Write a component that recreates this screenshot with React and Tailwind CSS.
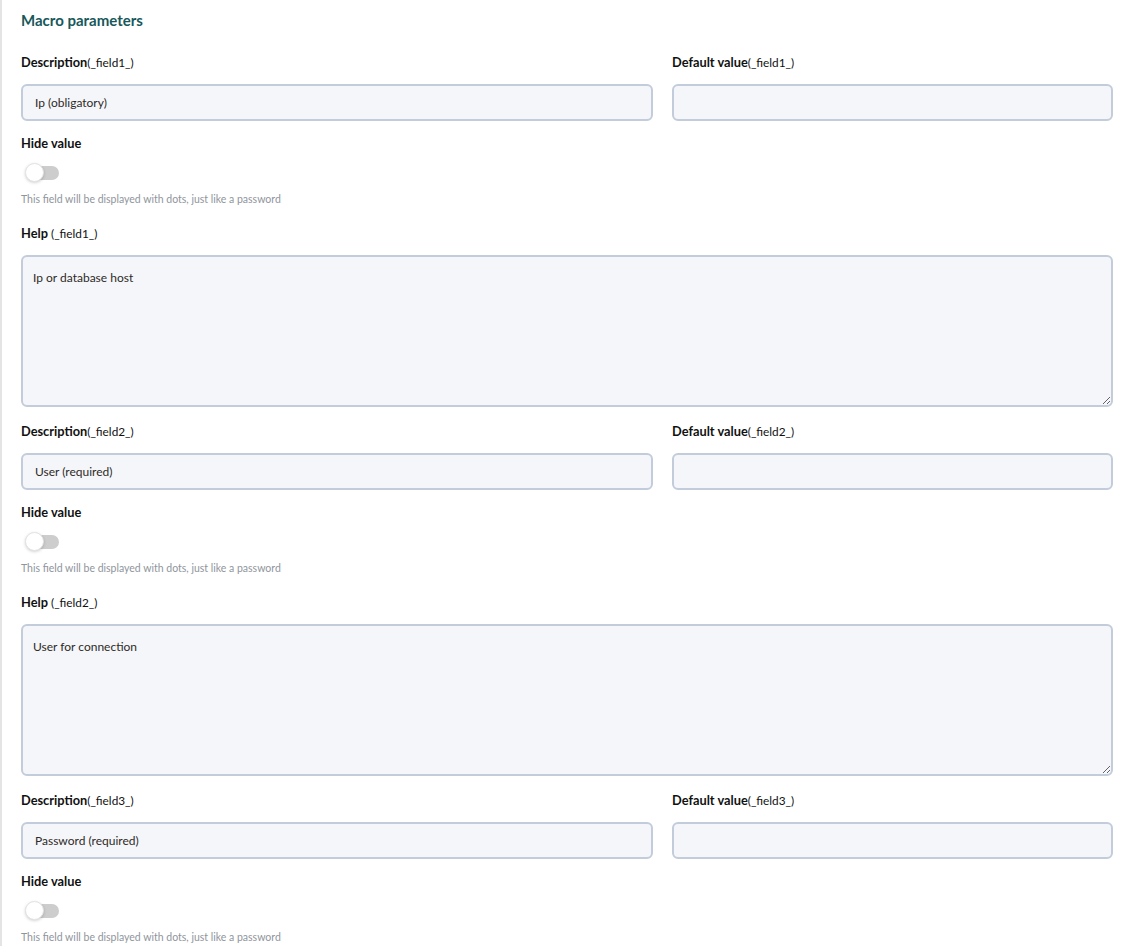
import React from 'react';

const fields = [
  { key: '_field1_', desc: 'Ip (obligatory)', help: 'Ip or database host', showHelp: true },
  { key: '_field2_', desc: 'User (required)', help: 'User for connection', showHelp: true },
  { key: '_field3_', desc: 'Password (required)', help: '', showHelp: false },
];

function Toggle() {
  return (
    <div className="relative mt-[12px] h-[19px] w-[40px]">
      <div className="absolute left-[8px] top-[3px] h-[14px] w-[30px] rounded-full bg-[#cdcdcd]"></div>
      <div className="absolute left-[4px] top-0 h-[19px] w-[19px] rounded-full border border-[#e3e3e3] bg-white shadow-[0_1px_3px_rgba(0,0,0,0.18)]"></div>
    </div>
  );
}

function FieldGroup({ field }) {
  return (
    <div>
      <div className="grid grid-cols-[632px_1fr] gap-x-[19px]">
        <div>
          <div className="h-[16px] leading-[16px] text-[12.8px] text-[#111]">
            <span className="font-bold">Description</span>
            <span className="text-[11.8px]">({field.key})</span>
          </div>
          <div className="mt-[14px] flex h-[37px] items-center rounded-[6px] border-2 border-[#c3ccdb] bg-[#f5f6fa] px-[12px] text-[12px] text-[#2e2a27]">
            {field.desc}
          </div>
        </div>
        <div>
          <div className="h-[16px] leading-[16px] text-[12.8px] text-[#111]">
            <span className="font-bold">Default value</span>
            <span className="text-[11.8px]">({field.key})</span>
          </div>
          <div className="mt-[14px] h-[37px] rounded-[6px] border-2 border-[#c3ccdb] bg-[#f5f6fa]"></div>
        </div>
      </div>

      <div className="mt-[14px] h-[16px] leading-[16px] text-[12.8px] font-bold text-[#111]">Hide value</div>
      <Toggle />
      <div className="mt-[10px] h-[14px] leading-[14px] text-[10.5px] text-[#8f959c]">
        This field will be displayed with dots, just like a password
      </div>

      {field.showHelp && (
        <>
          <div className="mt-[19px] h-[16px] leading-[16px] text-[12.8px] text-[#111]">
            <span className="font-bold">Help</span>
            <span className="text-[11.8px]"> ({field.key})</span>
          </div>
          <textarea
            readOnly
            defaultValue={field.help}
            className="mt-[14px] block h-[152px] w-full resize-y rounded-[6px] border-2 border-[#c3ccdb] bg-[#f5f6fa] px-[10px] pt-[12px] text-[12px] text-[#2e2a27] outline-none"
          />
        </>
      )}
    </div>
  );
}

export default function App() {
  return (
    <div className="min-h-[946px] w-full bg-white font-['Lato','Liberation_Sans',sans-serif]">
      <div className="min-h-[946px] border-l-2 border-[#e4e4e4] pl-[19px] pr-[16px] pt-[12px]">
        <h2 className="h-[16px] leading-[16px] text-[15px] font-bold text-[#17585a]">Macro parameters</h2>
        <div className="mt-[26px] flex flex-col gap-[16px]">
          {fields.map(f => (
            <FieldGroup key={f.key} field={f} />
          ))}
        </div>
      </div>
    </div>
  );
}
